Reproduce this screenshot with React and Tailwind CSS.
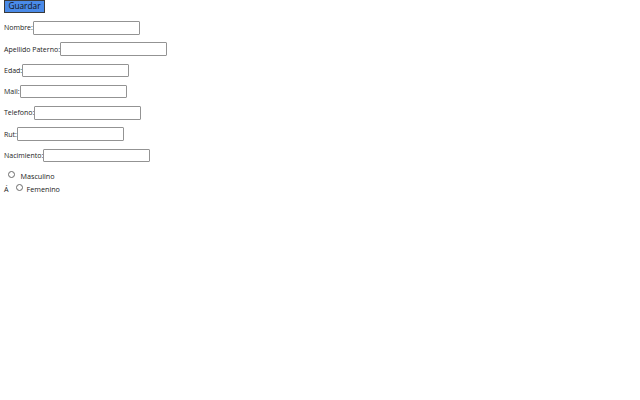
import React from "react";

const font = { fontFamily: '"Open Sans", "Noto Sans", sans-serif' };

function Row({ label }) {
  return (
    <div className="flex items-center h-[13.5px]">
      <span className="text-[7px] leading-none text-[#222]">{label}</span>
      <span className="block w-[107px] h-[13.5px] border border-[#939393] rounded-[1px] bg-white" />
    </div>
  );
}

function Radio() {
  return <span className="inline-block w-[7px] h-[7px] rounded-full border border-[#6a6a6a] bg-white" />;
}

export default function App() {
  return (
    <div className="w-[640px] h-[400px] bg-white pl-[4px]" style={font}>
      <div className="flex">
        <div className="w-[41px] h-[13px] bg-[#4a8ae8] border border-[#3a3a3a] flex items-center justify-center text-[8.3px] leading-none text-[#111]">
          Guardar
        </div>
      </div>
      <div className="flex flex-col gap-[7.75px] pt-[8px]">
        <Row label="Nombre:" />
        <Row label="Apellido Paterno:" />
        <Row label="Edad:" />
        <Row label="Mail:" />
        <Row label="Telefono:" />
        <Row label="Rut:" />
        <Row label="Nacimiento:" />
      </div>
      <div className="pt-[10px] text-[7.2px] leading-none text-[#222]">
        <div className="flex items-center h-[7px]">
          <span className="ml-[3.5px]"><Radio /></span>
          <span className="ml-[6px] mt-[2px]">Masculino</span>
        </div>
        <div className="flex items-center h-[7px] mt-[6px]">
          <span className="mt-[2px]">Á</span>
          <span className="ml-[7px]"><Radio /></span>
          <span className="ml-[4px] mt-[2px]">Femenino</span>
        </div>
      </div>
    </div>
  );
}
